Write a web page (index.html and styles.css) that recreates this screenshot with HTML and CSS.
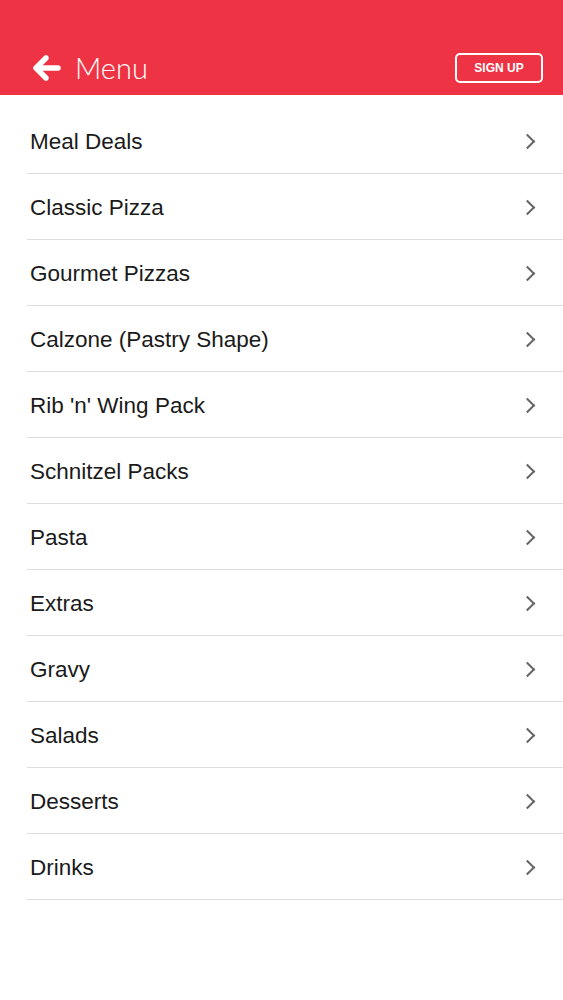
FILE: index.html
```html
<!DOCTYPE html>
<html lang="en">
<head>
    <meta charset="UTF-8">
    <meta name="viewport" content="width=device-width, initial-scale=1.0">
    <title>Menu</title>
    <link rel="stylesheet" href="styles.css">
</head>
<body>
    <header class="top-bar">
        <a class="back" href="#">
            <svg class="back-icon" viewBox="0 0 28 26" width="28" height="26">
                <path d="M13 3 L3 13 L13 23 M4 13 H25" fill="none" stroke="#fff" stroke-width="5.5" stroke-linecap="round" stroke-linejoin="round"/>
            </svg>
            <span class="title">Menu</span>
        </a>
        <button class="sign-up" type="button">SIGN UP</button>
    </header>
    <main>
        <ul class="menu-list">
            <li><span>Meal Deals</span><span class="chevron"></span></li>
            <li><span>Classic Pizza</span><span class="chevron"></span></li>
            <li><span>Gourmet Pizzas</span><span class="chevron"></span></li>
            <li><span>Calzone (Pastry Shape)</span><span class="chevron"></span></li>
            <li><span>Rib 'n' Wing Pack</span><span class="chevron"></span></li>
            <li><span>Schnitzel Packs</span><span class="chevron"></span></li>
            <li><span>Pasta</span><span class="chevron"></span></li>
            <li><span>Extras</span><span class="chevron"></span></li>
            <li><span>Gravy</span><span class="chevron"></span></li>
            <li><span>Salads</span><span class="chevron"></span></li>
            <li><span>Desserts</span><span class="chevron"></span></li>
            <li><span>Drinks</span><span class="chevron"></span></li>
        </ul>
    </main>
</body>
</html>
```

FILE: styles.css
```css
body {
    font-family: "Liberation Sans", Arial, sans-serif;
    margin: 0;
    padding: 0;
    background-color: #fff;
}
.top-bar {
    height: 95px;
    background-color: #ee3444;
    display: flex;
    align-items: center;
    justify-content: space-between;
    padding: 40px 20px 0 33px;
    box-sizing: border-box;
}
.back {
    display: flex;
    align-items: center;
    gap: 14px;
    color: #fff;
    text-decoration: none;
}
.back-icon {
    display: block;
}
.title {
    font-family: Lato, "Open Sans", sans-serif;
    font-weight: 300;
    font-size: 29px;
    line-height: 34px;
}
.sign-up {
    width: 88px;
    height: 30px;
    background: transparent;
    border: 2px solid #fff;
    border-radius: 5px;
    color: #fff;
    font-family: "Liberation Sans", Arial, sans-serif;
    font-weight: bold;
    font-size: 12px;
    padding: 0;
    cursor: pointer;
}
.menu-list {
    list-style: none;
    margin: 0;
    padding: 13px 0 0 27px;
}
.menu-list li {
    height: 62px;
    border-bottom: 1.5px solid #dcdcdc;
    display: flex;
    align-items: center;
    justify-content: space-between;
    padding: 3px 30px 0 3px;
    font-size: 22.5px;
    color: #1a1a1a;
}
.chevron {
    width: 9px;
    height: 9px;
    margin-top: -2px;
    border-top: 2px solid #666;
    border-right: 2px solid #666;
    transform: rotate(45deg);
}
```
